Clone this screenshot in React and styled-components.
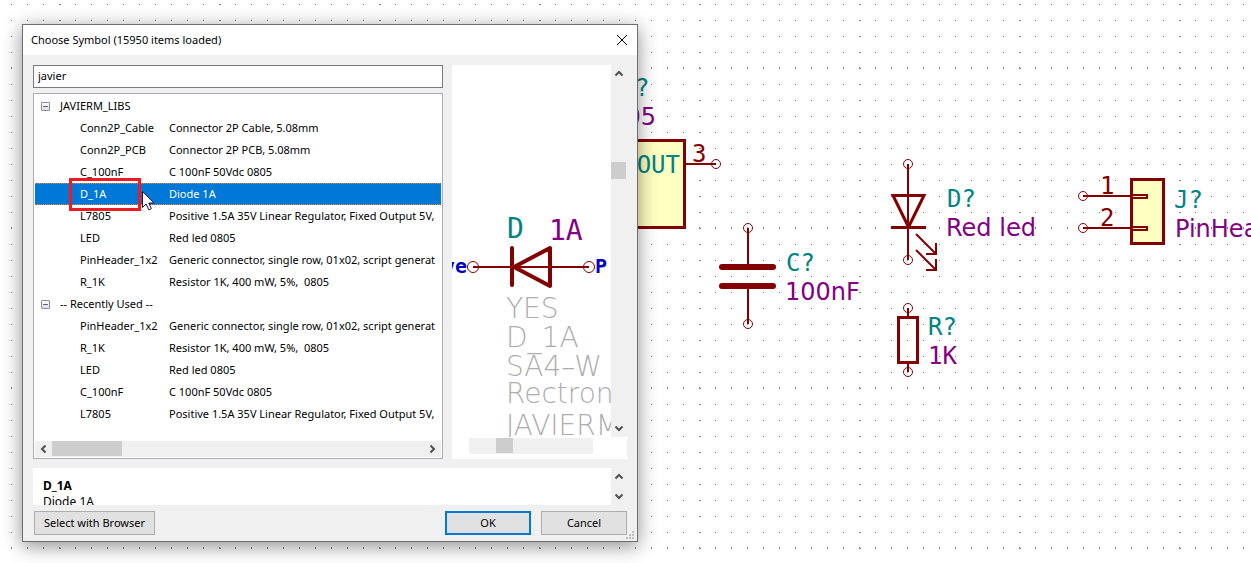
import React, { useState } from "react";
import styled, { createGlobalStyle, css } from "styled-components";

const GlobalStyle = createGlobalStyle`
  *, *::before, *::after { box-sizing: border-box; }
  body {
    margin: 0;
    background: #fff;
    color: #000;
    font-family: "Noto Sans", "Open Sans", sans-serif;
    font-size: 11px;
    line-height: 16px;
  }
  button, input { font: inherit; color: inherit; }
`;

const C = {
  part: "#840000",
  fill: "#ffffc2",
  ref: "#008484",
  value: "#840084",
  pinName: "#0000c2",
  hidden: "#adadad",
};

/* ---------- schematic sheet ---------- */

const Workspace = styled.main`
  display: grid;
  min-height: 100vh;
  overflow: hidden;
  & > * { grid-area: 1 / 1; }
`;

const Sheet = styled.div`
  margin: 4px 0 14px 11px;
  background-image:
    conic-gradient(from 270deg at 1px 1px, #848484 90deg, transparent 0),
    conic-gradient(from 270deg at 2px 1px, #848484 90deg, transparent 0),
    conic-gradient(from 270deg at 1px 2px, #848484 90deg, transparent 0);
  background-size: 16px 16px, 160px 16px, 16px 160px;
  background-position: 0 0, 48px 0, 0 63px;
`;

const Drawing = styled.svg`
  display: block;
  width: 100%;
  height: 100%;
  min-height: ${(p) => p.$minHeight || 0}px;
  overflow: hidden;
  fill: none;
  stroke: ${C.part};
  stroke-width: 2;
`;

const Label = styled.text`
  font-family: ${(p) => (p.$mono ? '"DejaVu Sans Mono", monospace' : '"DejaVu Sans", sans-serif')};
  font-size: ${(p) => p.$size || 24}px;
  font-weight: ${(p) => p.$weight || 400};
  fill: ${(p) => p.$color};
  stroke: none;
  white-space: pre;
`;

function PinEnd({ x, y, r = 4.5 }) {
  return <circle cx={x} cy={y} r={r} strokeWidth="1" />;
}

function Schematic() {
  return (
    <Drawing $minHeight={560} aria-label="Schematic">
      <g>
        <rect x="560" y="140.5" width="124.5" height="87" fill={C.fill} strokeWidth="3" />
        <path d="M686 164H716" />
        <PinEnd x={716} y={164} />
        <Label x="635" y="96" $mono $color={C.ref}>?</Label>
        <Label x="656" y="125" textAnchor="end" $color={C.value}>7805</Label>
        <Label x="680" y="173" textAnchor="end" $mono $color={C.ref}>OUT</Label>
        <Label x="692" y="162" $mono $color={C.part}>3</Label>
      </g>

      <g>
        <path d="M748 228V264M748 289V324" />
        <path d="M722 267H773M722 286H773" strokeWidth="6" strokeLinecap="round" />
        <PinEnd x={748} y={228} />
        <PinEnd x={748} y={324} />
        <Label x="786" y="271" $mono $color={C.ref}>C?</Label>
        <Label x="785" y="300" $color={C.value}>100nF</Label>
      </g>

      <g>
        <path d="M908 164V260" />
        <path d="M893 195.500H924L908.500 227Z" strokeWidth="3" />
        <path d="M891 227.500H926" strokeWidth="3" />
        <path d="M916 234L936 254M926 254H936V243M916 250L936 270M926 270H936V259" />
        <PinEnd x={908} y={164} />
        <PinEnd x={908} y={260} />
        <Label x="947" y="207" $mono $color={C.ref}>D?</Label>
        <Label x="946" y="236" $color={C.value}>Red led</Label>
      </g>

      <g>
        <rect x="898.500" y="317.500" width="19" height="45" strokeWidth="3" />
        <path d="M908 308V317M908 363V372" />
        <PinEnd x={908} y={308} />
        <PinEnd x={908} y={372} />
        <Label x="928" y="335" $mono $color={C.ref}>R?</Label>
        <Label x="928" y="364" $mono $color={C.value}>1K</Label>
      </g>

      <g>
        <rect x="1131.500" y="179.500" width="32" height="64" fill={C.fill} strokeWidth="3" />
        <path d="M1083 196H1131M1083 228H1131" />
        <path d="M1132 195H1147V198H1132M1132 227H1147V230H1132" />
        <PinEnd x={1083} y={196} />
        <PinEnd x={1083} y={228} />
        <Label x="1100" y="194" $mono $color={C.part}>1</Label>
        <Label x="1100" y="226" $mono $color={C.part}>2</Label>
        <Label x="1174" y="208" $mono $color={C.ref}>J?</Label>
        <Label x="1175" y="237" $color={C.value}>PinHeader</Label>
      </g>
    </Drawing>
  );
}

/* ---------- dialog frame ---------- */

const Dialog = styled.section`
  position: relative;
  justify-self: start;
  align-self: start;
  width: 616px;
  max-width: calc(100vw - 44px);
  margin: 24px 22px 21px;
  display: flex;
  flex-direction: column;
  background: #f0f0f0;
  border: 1px solid #6e6e6e;
  box-shadow: 0 4px 18px rgba(0, 0, 0, 0.45);
`;

const TitleBar = styled.header`
  display: flex;
  align-items: center;
  justify-content: space-between;
  height: 30px;
  padding: 0 9px 0 8px;
  background: #fff;
`;

const Title = styled.h1`
  margin: 0;
  font-size: inherit;
  font-weight: 400;
`;

const IconButton = styled.button`
  display: flex;
  align-items: center;
  justify-content: center;
  flex: none;
  width: ${(p) => p.$size || 16}px;
  height: ${(p) => p.$size || 16}px;
  padding: 0;
  border: 0;
  background: transparent;
`;

const Body = styled.div`
  display: grid;
  grid-template-columns: minmax(0, 410fr) minmax(0, 175fr);
  gap: 9px;
  padding: 10px 10px 0;
`;

const Column = styled.div`
  display: flex;
  flex-direction: column;
  gap: 5px;
  min-width: 0;
`;

const SearchBox = styled.input`
  width: 100%;
  height: 23px;
  padding: 0 4px 2px;
  background: #fff;
  border: 1px solid #7a7a7a;
  border-radius: 0;
  outline: none;
`;

/* ---------- scroll bars ---------- */

const Track = styled.div`
  display: flex;
  flex-direction: ${(p) => (p.$vertical ? "column" : "row")};
  justify-content: space-between;
  flex: none;
  background: #f0f0f0;
  ${(p) => (p.$vertical ? "width: 16px;" : "height: 16px;")}
`;

const Groove = styled.div`
  flex: 1;
  display: flex;
  flex-direction: ${(p) => (p.$vertical ? "column" : "row")};
  ${(p) => (p.$vertical ? "padding-top" : "padding-left")}: ${(p) => p.$start || 0}px;
`;

const Thumb = styled.div`
  background: #cdcdcd;
  ${(p) => (p.$vertical ? css`width: 15px; height: ${p.$length}px;` : css`height: 15px; width: ${p.$length}px;`)}
`;

const turns = { up: 0, right: 90, down: 180, left: 270 };

function Arrow({ dir }) {
  return (
    <IconButton type="button" aria-label={`Scroll ${dir}`}>
      <svg width="16" height="16" fill="none" stroke="#505050" strokeWidth="2">
        <path d="M4.500 10.500L8 7L11.500 10.500" transform={`rotate(${turns[dir]} 8 8)`} />
      </svg>
    </IconButton>
  );
}

/* ---------- symbol tree ---------- */

const TreeBox = styled.div`
  display: flex;
  flex-direction: column;
  justify-content: space-between;
  min-height: 366px;
  padding: 1px;
  background: #fff;
  border: 1px solid #abadb3;
  overflow: hidden;
`;

const Tree = styled.table`
  width: 100%;
  table-layout: fixed;
  border-collapse: collapse;
`;

const NameCol = styled.col`
  width: 134px;
`;

const Row = styled.tr`
  height: 22px;
  cursor: default;
  ${(p) =>
    p.$selected &&
    css`
      color: #fff;
      background:
        repeating-linear-gradient(90deg, #f08728 0 1px, #0078d7 1px 2px) top / 100% 1px no-repeat,
        repeating-linear-gradient(90deg, #f08728 0 1px, #0078d7 1px 2px) bottom / 100% 1px no-repeat,
        #0078d7;
    `}
`;

const NameCell = styled.td`
  position: relative;
  height: 22px;
  padding: 0 0 0 45px;
  white-space: pre;
`;

const TextCell = styled.td`
  padding: 0;
  overflow: hidden;
  white-space: pre;
`;

const GroupCell = styled.th`
  height: 22px;
  padding: 0 0 0 6px;
  font-weight: 400;
  text-align: left;
`;

const GroupLine = styled.div`
  display: flex;
  align-items: center;
  gap: 10px;
`;

const Toggle = styled.button`
  display: flex;
  align-items: center;
  justify-content: center;
  width: 9px;
  height: 9px;
  padding: 0;
  border: 1px solid #919191;
  border-radius: 1px;
  background: linear-gradient(#fff, #dedede);
  &::before {
    content: "";
    width: 5px;
    height: 1px;
    background: #4b63a7;
  }
`;

const Highlight = styled.span`
  position: absolute;
  inset: -5px 28px -6px 34px;
  border: 3px solid #ed1c24;
  pointer-events: none;
`;

const Pointer = styled.svg`
  position: absolute;
  left: 107px;
  top: 8px;
  z-index: 1;
  pointer-events: none;
`;

const groups = [
  {
    title: "JAVIERM_LIBS",
    items: [
      ["Conn2P_Cable", "Connector 2P Cable, 5.08mm"],
      ["Conn2P_PCB", "Connector 2P PCB, 5.08mm"],
      ["C_100nF", "C 100nF 50Vdc 0805"],
      ["D_1A", "Diode 1A"],
      ["L7805", "Positive 1.5A 35V Linear Regulator, Fixed Output 5V,"],
      ["LED", "Red led 0805"],
      ["PinHeader_1x2", "Generic connector, single row, 01x02, script generat"],
      ["R_1K", "Resistor 1K, 400 mW, 5%,  0805"],
    ],
  },
  {
    title: "-- Recently Used --",
    items: [
      ["PinHeader_1x2", "Generic connector, single row, 01x02, script generat"],
      ["R_1K", "Resistor 1K, 400 mW, 5%,  0805"],
      ["LED", "Red led 0805"],
      ["C_100nF", "C 100nF 50Vdc 0805"],
      ["L7805", "Positive 1.5A 35V Linear Regulator, Fixed Output 5V,"],
    ],
  },
];

function SymbolTree() {
  return (
    <TreeBox>
      <Tree aria-label="Symbols">
        <colgroup>
          <NameCol />
          <col />
        </colgroup>
        {groups.map((g) => (
          <tbody key={g.title}>
            <Row>
              <GroupCell colSpan={2} scope="rowgroup">
                <GroupLine>
                  <Toggle type="button" aria-label={`Collapse ${g.title}`} />
                  {g.title}
                </GroupLine>
              </GroupCell>
            </Row>
            {g.items.map(([name, text]) => {
              const selected = name === "D_1A";
              return (
                <Row key={name} $selected={selected} aria-selected={selected}>
                  <NameCell>
                    {name}
                    {selected && (
                      <>
                        <Highlight />
                        <Pointer width="13" height="20" viewBox="0 0 13 20" aria-hidden="true">
                          <path
                            d="M0.500 0.500V16.500L4.200 13L6.800 18.800L9.300 17.700L6.800 12H12Z"
                            fill="#fff"
                            stroke="#14143c"
                          />
                        </Pointer>
                      </>
                    )}
                  </NameCell>
                  <TextCell>{text}</TextCell>
                </Row>
              );
            })}
          </tbody>
        ))}
      </Tree>
      <Track>
        <Arrow dir="left" />
        <Groove $start={1}>
          <Thumb $length={70} />
        </Groove>
        <Arrow dir="right" />
      </Track>
    </TreeBox>
  );
}

/* ---------- preview ---------- */

const Preview = styled.div`
  display: grid;
  grid-template-columns: minmax(0, 1fr) 16px;
  grid-template-rows: 1fr 22px;
  background: #fff;
`;

const PreviewFooter = styled.div`
  grid-column: 1 / -1;
  padding: 1px 34px 0 17px;
`;

function SymbolPreview() {
  return (
    <Preview>
      <Drawing aria-label="Symbol preview">
        <path d="M21 202H137" />
        <path d="M60 183V220M62 202L98 183V221Z" strokeWidth="4" strokeLinecap="round" strokeLinejoin="round" />
        <PinEnd x={21} y={202} r={5.5} />
        <PinEnd x={137} y={202} r={5.5} />
        <Label x="15" y="208" textAnchor="end" $mono $weight={700} $size={20} $color={C.pinName}>ve</Label>
        <Label x="143" y="208" $mono $weight={700} $size={20} $color={C.pinName}>P</Label>
        <Label x="55" y="173" $mono $size={28} $color={C.ref}>D</Label>
        <Label x="97" y="175" $mono $size={28} $color={C.value}>1A</Label>
        {[
          ["YES", 253],
          ["D_1A", 282],
          ["SA4–W", 311],
          ["Rectron", 338],
          ["JAVIERM", 370],
        ].map(([t, y]) => (
          <Label key={t} x="54" y={y} $size={28} $weight={200} $color={C.hidden}>
            {t}
          </Label>
        ))}
      </Drawing>
      <Track $vertical>
        <Arrow dir="up" />
        <Groove $vertical $start={81}>
          <Thumb $vertical $length={17} />
        </Groove>
        <Arrow dir="down" />
      </Track>
      <PreviewFooter>
        <Track>
          <Groove $start={27}>
            <Thumb $length={17} />
          </Groove>
        </Track>
      </PreviewFooter>
    </Preview>
  );
}

/* ---------- details and buttons ---------- */

const Details = styled.div`
  display: flex;
  height: 37px;
  margin: 9px 10px 0;
`;

const DetailsText = styled.div`
  flex: 1;
  padding: 10px 10px 0;
  overflow: hidden;
  background: #fff;
  font-size: 12px;
`;

const DetailsName = styled.strong`
  display: block;
`;

const Footer = styled.footer`
  display: flex;
  gap: 10px;
  padding: 6px 10px 6px 11px;
`;

const PushButton = styled.button`
  min-width: ${(p) => (p.$wide ? 121 : 86)}px;
  height: 24px;
  padding: 0 4px 1px;
  background: #e1e1e1;
  border: ${(p) => (p.$primary ? "2px solid #0078d7" : "1px solid #adadad")};
  border-radius: 0;
  ${(p) => p.$wide && "margin-right: auto;"}
`;

const Grip = styled.svg`
  position: absolute;
  right: 3px;
  bottom: 2px;
`;

export default function App() {
  const [query, setQuery] = useState("javier");
  return (
    <>
      <GlobalStyle />
      <Workspace>
        <Sheet />
        <Schematic />
        <Dialog role="dialog" aria-labelledby="dialog-title">
          <TitleBar>
            <Title id="dialog-title">Choose Symbol (15950 items loaded)</Title>
            <IconButton type="button" aria-label="Close" $size={12}>
              <svg width="12" height="12" fill="none" stroke="#000">
                <path d="M1 1L11 11M11 1L1 11" />
              </svg>
            </IconButton>
          </TitleBar>
          <Body>
            <Column>
              <SearchBox
                type="text"
                aria-label="Filter symbols"
                value={query}
                onChange={(e) => setQuery(e.target.value)}
              />
              <SymbolTree />
            </Column>
            <SymbolPreview />
          </Body>
          <Details>
            <DetailsText>
              <DetailsName>D_1A</DetailsName>
              Diode 1A
            </DetailsText>
            <Track $vertical>
              <Arrow dir="up" />
              <Arrow dir="down" />
            </Track>
          </Details>
          <Footer>
            <PushButton type="button" $wide>Select with Browser</PushButton>
            <PushButton type="submit" $primary>OK</PushButton>
            <PushButton type="button">Cancel</PushButton>
          </Footer>
          <Grip width="8" height="8" fill="#bfbfbf" aria-hidden="true">
            <path d="M6 0h2v2h-2zM3 3h2v2h-2zM6 3h2v2h-2zM0 6h2v2h-2zM3 6h2v2h-2zM6 6h2v2h-2z" />
          </Grip>
        </Dialog>
      </Workspace>
    </>
  );
}
